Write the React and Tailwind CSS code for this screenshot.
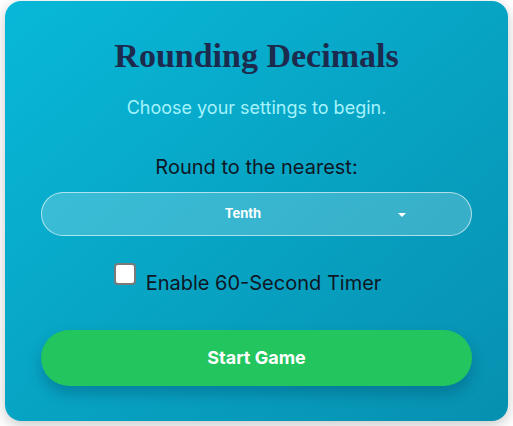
import React, { useState } from 'react';

const App = () => {
  const [timer, setTimer] = useState(false);

  return (
    <div className="min-h-[426px] w-[513px] bg-white pl-[5px] pt-[1px]" style={{ fontFamily: 'Inter, "Noto Sans", sans-serif' }}>
      <div className="flex h-[420px] w-[503px] flex-col items-center rounded-2xl bg-linear-to-br from-[#08b8d8] to-[#0790b0] px-9 pt-9 pb-[35px] shadow-[0_4px_14px_rgba(0,0,0,0.22)]">
        <h1
          className="text-[34px] leading-[38px] font-bold text-[#1c2b4d]"
          style={{ fontFamily: '"Liberation Serif", "Times New Roman", serif' }}
        >
          Rounding Decimals
        </h1>
        <p className="mt-[19px] text-lg leading-7 text-[#a5f3fc]">Choose your settings to begin.</p>

        <p className="mt-[31px] text-xl leading-7 text-[#0f1624]">Round to the nearest:</p>

        <div className="relative mt-[11px] flex h-[44px] w-full items-center justify-center rounded-full border border-white/60 bg-white/20 pr-[27px]">
          <span className="text-[13px] font-bold text-white">Tenth</span>
          <span className="absolute right-[65px] top-[20px] h-0 w-0 border-x-4 border-t-4 border-x-transparent border-t-white" />
        </div>

        <label className="mt-[27px] flex cursor-pointer items-start gap-[10px] pr-[18px]">
          <span
            onClick={() => setTimer(!timer)}
            className="flex h-[22px] w-[22px] items-center justify-center rounded-[4px] border-2 border-[#7a7a7a] bg-white"
          >
            {timer && <span className="h-2 w-2 bg-[#0891b2]" />}
          </span>
          <span className="mt-[6px] text-xl leading-7 text-[#0f1624]">Enable 60-Second Timer</span>
        </label>

        <button className="mt-[33px] h-[56px] w-full rounded-full bg-[#22c55e] text-lg font-bold text-white shadow-[0_8px_14px_rgba(0,60,90,0.3)]">
          Start Game
        </button>
      </div>
    </div>
  );
};

export default App;
